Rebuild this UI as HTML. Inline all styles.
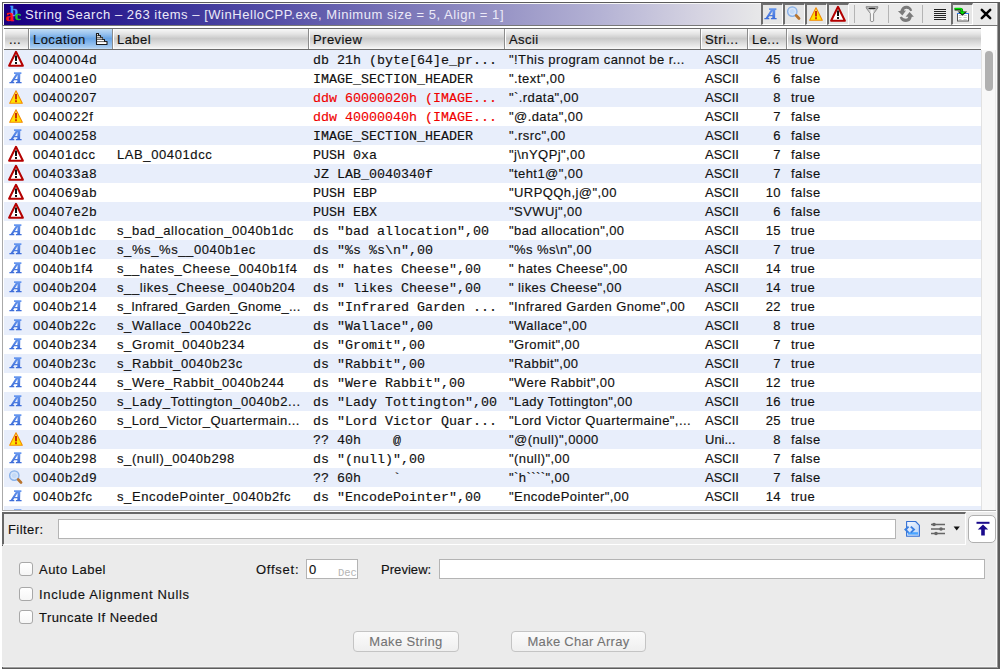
<!DOCTYPE html>
<html><head><meta charset="utf-8"><style>
html,body{margin:0;padding:0}
body{width:1000px;height:669px;overflow:hidden;position:relative;background:#fff;font-family:"Liberation Sans",sans-serif;font-size:13px;color:#111}
.abs{position:absolute}
#title{position:absolute;left:4px;top:4px;width:758px;height:21px;background:linear-gradient(to right,#1a0080 0%,#1a0082 2.4%,#342c96 19.3%,#5c56aa 39%,#8884be 58.8%,#b4b2d4 78.6%,#d6d4e2 91.8%,#e6e6e8 99%,#e8e8ea 100%);color:#eceaf8;line-height:21px;letter-spacing:0.54px;white-space:nowrap}
#hdr{position:absolute;left:4px;top:28px;width:977px;height:22px;border-top:1px solid #6c6c6c;border-bottom:1px solid #6c6c6c;box-sizing:border-box}
.h{position:absolute;top:29px;height:20px;line-height:22px;box-sizing:border-box;white-space:nowrap;overflow:hidden;background:linear-gradient(#f8f8f8 0%,#e4e4e4 25%,#c9c9c9 48%,#d8d8d8 65%,#eeeeee 90%,#fafafa 100%);border-left:1px solid #fff;letter-spacing:0.45px;-webkit-text-stroke:0.15px #111}
.h.sorted{background:linear-gradient(#c0dcf6 0%,#98c2ee 25%,#68a4e4 48%,#86b8ec 70%,#a8ccf0 92%,#c4e0f8 100%)}
.row{position:absolute;left:4px;width:977px;height:19px}
.c{position:absolute;top:0;height:19px;line-height:20px;-webkit-text-stroke:0.15px #111;padding-left:4px;box-sizing:border-box;white-space:nowrap;overflow:hidden;letter-spacing:0.42px}
.lc{letter-spacing:0.8px}
.ty{letter-spacing:0}
.lb{letter-spacing:0.6px}
.m{font-family:"Liberation Mono",monospace;font-size:13.33px;letter-spacing:0;-webkit-text-stroke:0.15px #111;line-height:19px;top:1px}
.red{color:#f00000;-webkit-text-stroke:0.15px #f00000}
.rt{text-align:right;padding-right:5px;padding-left:0}
svg{display:block}
.cb{position:absolute;left:19px;width:14px;height:14px;box-sizing:border-box;border:1px solid #a8a8a8;border-radius:3px;background:linear-gradient(#fff,#f6f6f6)}
.lbl{position:absolute;white-space:nowrap;letter-spacing:0.6px;-webkit-text-stroke:0.15px #111}
.btn{position:absolute;top:631px;height:21px;box-sizing:border-box;border:1px solid #c4c4c4;border-radius:4px;background:linear-gradient(#fbfbfb,#efefef);color:#737373;text-align:center;line-height:20px;letter-spacing:0.6px;-webkit-text-stroke:0.1px #737373}
</style></head><body>
<!-- window frame -->
<div class="abs" style="left:2px;top:2px;width:998px;height:667px;background:#5c5c5c"></div>
<div class="abs" style="left:3px;top:3px;width:995px;height:665px;background:#9c9c9c"></div>
<div class="abs" style="left:3px;top:3px;width:994px;height:664px;background:#f6f6f6"></div>
<div class="abs" style="left:4px;top:4px;width:992px;height:662px;background:#ebebeb"></div>
<!-- title -->
<div id="title"><div class="abs" style="left:0px;top:0px"><svg width="20" height="20" viewBox="0 0 20 20" style="overflow:visible"><text x="6.2" y="12.2" font-family="Liberation Serif" font-weight="bold" font-size="14" fill="#3e9cff" stroke="#3e9cff" stroke-width="0.3">b</text><text x="1.4" y="17.2" font-family="Liberation Serif" font-weight="bold" font-size="16.5" fill="#ff1414" stroke="#ff1414" stroke-width="0.4">a</text><text x="11.0" y="16.3" font-family="Liberation Serif" font-weight="bold" font-size="13" fill="#22cc22" stroke="#22cc22" stroke-width="0.4">c</text></svg></div><span style="position:absolute;left:21px;top:0">String Search &ndash; 263 items &ndash; [WinHelloCPP.exe, Minimum size = 5, Align = 1]</span></div>
<div class="abs" style="left:762px;top:4px;width:234px;height:21px;background:#eaeaea"></div>
<div class="abs" style="left:761px;top:3px;width:22px;height:22px;box-sizing:border-box;border-top:2px solid #6e6e6e;border-left:2px solid #6e6e6e;border-right:1px solid #fff;border-bottom:1px solid #fff;background:#e6e6e6"></div>
<div class="abs" style="left:783px;top:3px;width:22px;height:22px;box-sizing:border-box;border-top:2px solid #6e6e6e;border-left:2px solid #6e6e6e;border-right:1px solid #fff;border-bottom:1px solid #fff;background:#e6e6e6"></div>
<div class="abs" style="left:805px;top:3px;width:22px;height:22px;box-sizing:border-box;border-top:2px solid #6e6e6e;border-left:2px solid #6e6e6e;border-right:1px solid #fff;border-bottom:1px solid #fff;background:#e6e6e6"></div>
<div class="abs" style="left:827px;top:3px;width:22px;height:22px;box-sizing:border-box;border-top:2px solid #6e6e6e;border-left:2px solid #6e6e6e;border-right:1px solid #fff;border-bottom:1px solid #fff;background:#e6e6e6"></div>
<div class="abs" style="left:951px;top:3px;width:22px;height:22px;box-sizing:border-box;border-top:2px solid #6e6e6e;border-left:2px solid #6e6e6e;border-right:1px solid #fff;border-bottom:1px solid #fff;background:#e6e6e6"></div>
<svg class="abs" style="left:764px;top:8px" width="14" height="13" viewBox="0 0 14 13"><defs><linearGradient id="ag" x1="0" y1="0" x2="0" y2="1"><stop offset="0" stop-color="#6a9af0"/><stop offset="1" stop-color="#3a6ad8"/></linearGradient></defs><path d="M5 0.3 H12.4 V2 H11.3 L11.1 10 H12.6 V11.3 H6.9 V10 H8.3 L8.35 8.2 H5.2 L4.1 10 H5.3 V11.3 H0.4 V10 H1.7 L6.7 2 H5 Z M6 6.9 H8.4 L8.6 3 Z" fill="url(#ag)"/></svg>
<svg class="abs" style="left:786px;top:6px" width="16" height="16" viewBox="0 0 16 16"><circle cx="6.3" cy="5.6" r="4.7" fill="#c4daf6" stroke="#88b0e8" stroke-width="1.3"/><circle cx="6.3" cy="5.6" r="3.1" fill="none" stroke="#e4eefa" stroke-width="0.8"/><path d="M10.2 9.6 L13 12.4" stroke="#b8742e" stroke-width="2.8" stroke-linecap="round"/></svg>
<svg class="abs" style="left:808px;top:6px" width="16" height="16" viewBox="0 0 16 16"><defs><linearGradient id="yg" x1="0" y1="0" x2="0" y2="1"><stop offset="0" stop-color="#ffe890"/><stop offset="0.5" stop-color="#ffdc00"/><stop offset="1" stop-color="#ffe800"/></linearGradient></defs><path d="M8 1.8 L14.3 14.3 L1.7 14.3 Z" fill="url(#yg)" stroke="#f48a00" stroke-width="1.1" stroke-linejoin="round"/><rect x="7" y="5" width="2" height="5.4" fill="#c83000"/><rect x="7" y="11.2" width="2" height="2" fill="#d84000"/></svg>
<svg class="abs" style="left:829px;top:5px" width="18" height="18" viewBox="0 0 18 18"><path d="M9 1.8 L15.9 15.8 L2.1 15.8 Z" fill="#fff" stroke="#b40000" stroke-width="2" stroke-linejoin="round"/><rect x="8" y="5.5" width="2" height="5.5" fill="#111"/><rect x="8" y="12" width="2" height="2" fill="#111"/></svg>
<div class="abs" style="left:854px;top:5px;width:1px;height:18px;background:#b4b4b4"></div>
<div class="abs" style="left:888px;top:5px;width:1px;height:18px;background:#b4b4b4"></div>
<div class="abs" style="left:922px;top:5px;width:1px;height:18px;background:#b4b4b4"></div>
<svg class="abs" style="left:864px;top:5px" width="16" height="18" viewBox="0 0 16 18"><defs><linearGradient id="fg" x1="0" x2="1"><stop offset="0" stop-color="#9a9a9a"/><stop offset="0.5" stop-color="#fff"/><stop offset="1" stop-color="#8a8a8a"/></linearGradient></defs><path d="M2.2 1.6 H13.8 L13.8 3 L9.6 8.6 L9.6 16 Q8 17.6 6.4 16 L6.4 8.6 L2.2 3 Z" fill="url(#fg)" stroke="#8a8a8a" stroke-width="0.9"/><ellipse cx="8" cy="3.4" rx="3.6" ry="0.8" fill="#222"/></svg>
<svg class="abs" style="left:897px;top:5px" width="18" height="18" viewBox="0 0 18 18"><path d="M0.9 6 L9 5.6 L5.4 10.6 Z M3.2 6.2 Q5 0.8 9.5 0.8 Q13.5 0.8 15.2 5.4 L13.4 6.2 Q12 3.8 9.4 3.8 Q7.2 3.8 6.6 5.9 Z" fill="#7b7b7b"/><path d="M8.6 11.7 L16.9 11.7 L12.6 7 Z M2.7 12.4 Q4.5 16.9 9 16.9 Q13.8 16.9 14.8 11.7 L11.4 11.7 Q10.8 13.8 9 13.8 Q6.5 13.8 4.4 11.6 Z" fill="#7b7b7b"/></svg>
<div class="abs" style="left:934px;top:9px;width:12px;height:1px;background:#222"></div>
<div class="abs" style="left:934px;top:11px;width:12px;height:1px;background:#222"></div>
<div class="abs" style="left:934px;top:13px;width:12px;height:1px;background:#222"></div>
<div class="abs" style="left:934px;top:15px;width:12px;height:1px;background:#222"></div>
<div class="abs" style="left:934px;top:17px;width:12px;height:1px;background:#222"></div>
<div class="abs" style="left:934px;top:19px;width:12px;height:1px;background:#222"></div>
<svg class="abs" style="left:954px;top:6px" width="16" height="16" viewBox="0 0 16 16"><rect x="3.5" y="7.5" width="11" height="7.5" fill="#fff" stroke="#555" stroke-width="1"/><path d="M3 7.5 H15" stroke="#2a7af0" stroke-width="1"/><path d="M4.8 9.5 H7.5 M9.5 9.5 H12.8 M4.8 11.5 H7.5 M9.5 11.5 H12.8 M4.8 13.5 H7.5 M9.5 13.5 H12.8" stroke="#c4c4c4" stroke-width="0.9"/><path d="M0.6 3.2 H6.2 Q7.9 3.2 7.9 5.2 V6.5" stroke="#111" stroke-width="2.6" fill="none"/><path d="M0.6 2.6 H6.2 Q7.9 2.6 7.9 4.6 V6.5" stroke="#00e000" stroke-width="1.8" fill="none"/><path d="M3.6 5.4 L13.2 5.4 L8.4 9.8 Z" fill="#111"/><path d="M5.2 5.6 L11.6 5.6 L8.4 8.6 Z" fill="#00e000"/></svg>
<svg class="abs" style="left:980px;top:8px" width="12" height="12" viewBox="0 0 12 12"><path d="M1.8 1.8 L10.2 10.2 M10.2 1.8 L1.8 10.2" stroke="#000" stroke-width="2.5" stroke-linecap="round"/></svg>
<div class="abs" style="left:2px;top:25px;width:996px;height:1px;background:#777"></div>
<!-- table region -->
<div class="abs" style="left:2px;top:26px;width:994px;height:486px;background:#fff"></div>
<div class="abs" style="left:2px;top:26px;width:1px;height:485px;background:#aaa"></div>
<div class="abs" style="left:2px;top:510px;width:994px;height:1px;background:#aaa"></div>
<div id="hdr"></div>
<div class="h" style="left:4px;width:24px"><span style="padding-left:4px">...</span></div>
<div class="abs" style="left:28px;top:29px;width:1px;height:20px;background:#8c8c8c"></div>
<div class="h sorted" style="left:29px;width:83px"><span style="padding-left:3px">Location</span><svg class="abs" style="left:65px;top:4px" width="13" height="12" viewBox="0 0 13 12"><path d="M1.5 0.5 H3.5 V2.5 H5.5 V4.5 H7.5 V6.5 H9.5 V8.5 H12 V11.5 H1.5 Z" fill="#fff" stroke="#1a1a1a" stroke-width="1.1" stroke-linejoin="round"/><rect x="2" y="4.6" width="5.4" height="1.6" fill="#bdbdbd"/><path d="M2 2.5 H5.4 M2 4.3 H7.4 M2 6.5 H9.4 M2 8.6 H11.8" stroke="#2a2a2a" stroke-width="0.7"/></svg></div>
<div class="abs" style="left:112px;top:29px;width:1px;height:20px;background:#8c8c8c"></div>
<div class="h" style="left:113px;width:195px"><span style="padding-left:3px">Label</span></div>
<div class="abs" style="left:308px;top:29px;width:1px;height:20px;background:#8c8c8c"></div>
<div class="h" style="left:309px;width:195px"><span style="padding-left:3px">Preview</span></div>
<div class="abs" style="left:504px;top:29px;width:1px;height:20px;background:#8c8c8c"></div>
<div class="h" style="left:505px;width:195px"><span style="padding-left:3px">Ascii</span></div>
<div class="abs" style="left:700px;top:29px;width:1px;height:20px;background:#8c8c8c"></div>
<div class="h" style="left:701px;width:46px"><span style="padding-left:3px">Stri...</span></div>
<div class="abs" style="left:747px;top:29px;width:1px;height:20px;background:#8c8c8c"></div>
<div class="h" style="left:748px;width:38px"><span style="padding-left:3px">Le...</span></div>
<div class="abs" style="left:786px;top:29px;width:1px;height:20px;background:#8c8c8c"></div>
<div class="h" style="left:787px;width:194px"><span style="padding-left:3px">Is Word</span></div>
<div class="abs" style="left:0;top:50px;width:1000px;height:460px;overflow:hidden">
<div class="abs" style="left:0;top:-50px;width:1000px;height:560px">
<div class="row" style="top:50px;background:#e8eefb"><svg class="abs" style="left:3px;top:0px" width="18" height="18" viewBox="0 0 18 18"><path d="M9 1.8 L15.9 15.8 L2.1 15.8 Z" fill="#fff" stroke="#b40000" stroke-width="2" stroke-linejoin="round"/><rect x="8" y="5.5" width="2" height="5.5" fill="#111"/><rect x="8" y="12" width="2" height="2" fill="#111"/></svg><div class="c lc" style="left:25px;width:83px">0040004d</div><div class="c lb" style="left:109px;width:195px"></div><div class="c m" style="left:305px;width:195px">db&nbsp;21h&nbsp;(byte[64]e_pr...</div><div class="c" style="left:501px;width:195px">"!This program cannot be r...</div><div class="c ty" style="left:697px;width:46px">ASCII</div><div class="c rt" style="left:744px;width:38px">45</div><div class="c" style="left:783px;width:194px">true</div></div>
<div class="row" style="top:69px;background:#ffffff"><svg class="abs" style="left:5px;top:3px" width="14" height="13" viewBox="0 0 14 13"><defs><linearGradient id="ag" x1="0" y1="0" x2="0" y2="1"><stop offset="0" stop-color="#6a9af0"/><stop offset="1" stop-color="#3a6ad8"/></linearGradient></defs><path d="M5 0.3 H12.4 V2 H11.3 L11.1 10 H12.6 V11.3 H6.9 V10 H8.3 L8.35 8.2 H5.2 L4.1 10 H5.3 V11.3 H0.4 V10 H1.7 L6.7 2 H5 Z M6 6.9 H8.4 L8.6 3 Z" fill="url(#ag)"/></svg><div class="c lc" style="left:25px;width:83px">004001e0</div><div class="c lb" style="left:109px;width:195px"></div><div class="c m" style="left:305px;width:195px">IMAGE_SECTION_HEADER</div><div class="c" style="left:501px;width:195px">".text",00</div><div class="c ty" style="left:697px;width:46px">ASCII</div><div class="c rt" style="left:744px;width:38px">6</div><div class="c" style="left:783px;width:194px">false</div></div>
<div class="row" style="top:88px;background:#e8eefb"><svg class="abs" style="left:4px;top:1px" width="16" height="16" viewBox="0 0 16 16"><defs><linearGradient id="yg" x1="0" y1="0" x2="0" y2="1"><stop offset="0" stop-color="#ffe890"/><stop offset="0.5" stop-color="#ffdc00"/><stop offset="1" stop-color="#ffe800"/></linearGradient></defs><path d="M8 1.8 L14.3 14.3 L1.7 14.3 Z" fill="url(#yg)" stroke="#f48a00" stroke-width="1.1" stroke-linejoin="round"/><rect x="7" y="5" width="2" height="5.4" fill="#c83000"/><rect x="7" y="11.2" width="2" height="2" fill="#d84000"/></svg><div class="c lc" style="left:25px;width:83px">00400207</div><div class="c lb" style="left:109px;width:195px"></div><div class="c m red" style="left:305px;width:195px">ddw&nbsp;60000020h&nbsp;(IMAGE...</div><div class="c" style="left:501px;width:195px">"`.rdata",00</div><div class="c ty" style="left:697px;width:46px">ASCII</div><div class="c rt" style="left:744px;width:38px">8</div><div class="c" style="left:783px;width:194px">true</div></div>
<div class="row" style="top:107px;background:#ffffff"><svg class="abs" style="left:4px;top:1px" width="16" height="16" viewBox="0 0 16 16"><defs><linearGradient id="yg" x1="0" y1="0" x2="0" y2="1"><stop offset="0" stop-color="#ffe890"/><stop offset="0.5" stop-color="#ffdc00"/><stop offset="1" stop-color="#ffe800"/></linearGradient></defs><path d="M8 1.8 L14.3 14.3 L1.7 14.3 Z" fill="url(#yg)" stroke="#f48a00" stroke-width="1.1" stroke-linejoin="round"/><rect x="7" y="5" width="2" height="5.4" fill="#c83000"/><rect x="7" y="11.2" width="2" height="2" fill="#d84000"/></svg><div class="c lc" style="left:25px;width:83px">0040022f</div><div class="c lb" style="left:109px;width:195px"></div><div class="c m red" style="left:305px;width:195px">ddw&nbsp;40000040h&nbsp;(IMAGE...</div><div class="c" style="left:501px;width:195px">"@.data",00</div><div class="c ty" style="left:697px;width:46px">ASCII</div><div class="c rt" style="left:744px;width:38px">7</div><div class="c" style="left:783px;width:194px">false</div></div>
<div class="row" style="top:126px;background:#e8eefb"><svg class="abs" style="left:5px;top:3px" width="14" height="13" viewBox="0 0 14 13"><defs><linearGradient id="ag" x1="0" y1="0" x2="0" y2="1"><stop offset="0" stop-color="#6a9af0"/><stop offset="1" stop-color="#3a6ad8"/></linearGradient></defs><path d="M5 0.3 H12.4 V2 H11.3 L11.1 10 H12.6 V11.3 H6.9 V10 H8.3 L8.35 8.2 H5.2 L4.1 10 H5.3 V11.3 H0.4 V10 H1.7 L6.7 2 H5 Z M6 6.9 H8.4 L8.6 3 Z" fill="url(#ag)"/></svg><div class="c lc" style="left:25px;width:83px">00400258</div><div class="c lb" style="left:109px;width:195px"></div><div class="c m" style="left:305px;width:195px">IMAGE_SECTION_HEADER</div><div class="c" style="left:501px;width:195px">".rsrc",00</div><div class="c ty" style="left:697px;width:46px">ASCII</div><div class="c rt" style="left:744px;width:38px">6</div><div class="c" style="left:783px;width:194px">false</div></div>
<div class="row" style="top:145px;background:#ffffff"><svg class="abs" style="left:3px;top:0px" width="18" height="18" viewBox="0 0 18 18"><path d="M9 1.8 L15.9 15.8 L2.1 15.8 Z" fill="#fff" stroke="#b40000" stroke-width="2" stroke-linejoin="round"/><rect x="8" y="5.5" width="2" height="5.5" fill="#111"/><rect x="8" y="12" width="2" height="2" fill="#111"/></svg><div class="c lc" style="left:25px;width:83px">00401dcc</div><div class="c lb" style="left:109px;width:195px">LAB_00401dcc</div><div class="c m" style="left:305px;width:195px">PUSH&nbsp;0xa</div><div class="c" style="left:501px;width:195px">"j\nYQPj",00</div><div class="c ty" style="left:697px;width:46px">ASCII</div><div class="c rt" style="left:744px;width:38px">7</div><div class="c" style="left:783px;width:194px">false</div></div>
<div class="row" style="top:164px;background:#e8eefb"><svg class="abs" style="left:3px;top:0px" width="18" height="18" viewBox="0 0 18 18"><path d="M9 1.8 L15.9 15.8 L2.1 15.8 Z" fill="#fff" stroke="#b40000" stroke-width="2" stroke-linejoin="round"/><rect x="8" y="5.5" width="2" height="5.5" fill="#111"/><rect x="8" y="12" width="2" height="2" fill="#111"/></svg><div class="c lc" style="left:25px;width:83px">004033a8</div><div class="c lb" style="left:109px;width:195px"></div><div class="c m" style="left:305px;width:195px">JZ&nbsp;LAB_0040340f</div><div class="c" style="left:501px;width:195px">"teht1@",00</div><div class="c ty" style="left:697px;width:46px">ASCII</div><div class="c rt" style="left:744px;width:38px">7</div><div class="c" style="left:783px;width:194px">false</div></div>
<div class="row" style="top:183px;background:#ffffff"><svg class="abs" style="left:3px;top:0px" width="18" height="18" viewBox="0 0 18 18"><path d="M9 1.8 L15.9 15.8 L2.1 15.8 Z" fill="#fff" stroke="#b40000" stroke-width="2" stroke-linejoin="round"/><rect x="8" y="5.5" width="2" height="5.5" fill="#111"/><rect x="8" y="12" width="2" height="2" fill="#111"/></svg><div class="c lc" style="left:25px;width:83px">004069ab</div><div class="c lb" style="left:109px;width:195px"></div><div class="c m" style="left:305px;width:195px">PUSH&nbsp;EBP</div><div class="c" style="left:501px;width:195px">"URPQQh,j@",00</div><div class="c ty" style="left:697px;width:46px">ASCII</div><div class="c rt" style="left:744px;width:38px">10</div><div class="c" style="left:783px;width:194px">false</div></div>
<div class="row" style="top:202px;background:#e8eefb"><svg class="abs" style="left:3px;top:0px" width="18" height="18" viewBox="0 0 18 18"><path d="M9 1.8 L15.9 15.8 L2.1 15.8 Z" fill="#fff" stroke="#b40000" stroke-width="2" stroke-linejoin="round"/><rect x="8" y="5.5" width="2" height="5.5" fill="#111"/><rect x="8" y="12" width="2" height="2" fill="#111"/></svg><div class="c lc" style="left:25px;width:83px">00407e2b</div><div class="c lb" style="left:109px;width:195px"></div><div class="c m" style="left:305px;width:195px">PUSH&nbsp;EBX</div><div class="c" style="left:501px;width:195px">"SVWUj",00</div><div class="c ty" style="left:697px;width:46px">ASCII</div><div class="c rt" style="left:744px;width:38px">6</div><div class="c" style="left:783px;width:194px">false</div></div>
<div class="row" style="top:221px;background:#ffffff"><svg class="abs" style="left:5px;top:3px" width="14" height="13" viewBox="0 0 14 13"><defs><linearGradient id="ag" x1="0" y1="0" x2="0" y2="1"><stop offset="0" stop-color="#6a9af0"/><stop offset="1" stop-color="#3a6ad8"/></linearGradient></defs><path d="M5 0.3 H12.4 V2 H11.3 L11.1 10 H12.6 V11.3 H6.9 V10 H8.3 L8.35 8.2 H5.2 L4.1 10 H5.3 V11.3 H0.4 V10 H1.7 L6.7 2 H5 Z M6 6.9 H8.4 L8.6 3 Z" fill="url(#ag)"/></svg><div class="c lc" style="left:25px;width:83px">0040b1dc</div><div class="c lb" style="left:109px;width:195px">s_bad_allocation_0040b1dc</div><div class="c m" style="left:305px;width:195px">ds&nbsp;"bad&nbsp;allocation",00</div><div class="c" style="left:501px;width:195px">"bad allocation",00</div><div class="c ty" style="left:697px;width:46px">ASCII</div><div class="c rt" style="left:744px;width:38px">15</div><div class="c" style="left:783px;width:194px">true</div></div>
<div class="row" style="top:240px;background:#e8eefb"><svg class="abs" style="left:5px;top:3px" width="14" height="13" viewBox="0 0 14 13"><defs><linearGradient id="ag" x1="0" y1="0" x2="0" y2="1"><stop offset="0" stop-color="#6a9af0"/><stop offset="1" stop-color="#3a6ad8"/></linearGradient></defs><path d="M5 0.3 H12.4 V2 H11.3 L11.1 10 H12.6 V11.3 H6.9 V10 H8.3 L8.35 8.2 H5.2 L4.1 10 H5.3 V11.3 H0.4 V10 H1.7 L6.7 2 H5 Z M6 6.9 H8.4 L8.6 3 Z" fill="url(#ag)"/></svg><div class="c lc" style="left:25px;width:83px">0040b1ec</div><div class="c lb" style="left:109px;width:195px">s_%s_%s__0040b1ec</div><div class="c m" style="left:305px;width:195px">ds&nbsp;"%s&nbsp;%s\n",00</div><div class="c" style="left:501px;width:195px">"%s %s\n",00</div><div class="c ty" style="left:697px;width:46px">ASCII</div><div class="c rt" style="left:744px;width:38px">7</div><div class="c" style="left:783px;width:194px">true</div></div>
<div class="row" style="top:259px;background:#ffffff"><svg class="abs" style="left:5px;top:3px" width="14" height="13" viewBox="0 0 14 13"><defs><linearGradient id="ag" x1="0" y1="0" x2="0" y2="1"><stop offset="0" stop-color="#6a9af0"/><stop offset="1" stop-color="#3a6ad8"/></linearGradient></defs><path d="M5 0.3 H12.4 V2 H11.3 L11.1 10 H12.6 V11.3 H6.9 V10 H8.3 L8.35 8.2 H5.2 L4.1 10 H5.3 V11.3 H0.4 V10 H1.7 L6.7 2 H5 Z M6 6.9 H8.4 L8.6 3 Z" fill="url(#ag)"/></svg><div class="c lc" style="left:25px;width:83px">0040b1f4</div><div class="c lb" style="left:109px;width:195px">s__hates_Cheese_0040b1f4</div><div class="c m" style="left:305px;width:195px">ds&nbsp;"&nbsp;hates&nbsp;Cheese",00</div><div class="c" style="left:501px;width:195px">" hates Cheese",00</div><div class="c ty" style="left:697px;width:46px">ASCII</div><div class="c rt" style="left:744px;width:38px">14</div><div class="c" style="left:783px;width:194px">true</div></div>
<div class="row" style="top:278px;background:#e8eefb"><svg class="abs" style="left:5px;top:3px" width="14" height="13" viewBox="0 0 14 13"><defs><linearGradient id="ag" x1="0" y1="0" x2="0" y2="1"><stop offset="0" stop-color="#6a9af0"/><stop offset="1" stop-color="#3a6ad8"/></linearGradient></defs><path d="M5 0.3 H12.4 V2 H11.3 L11.1 10 H12.6 V11.3 H6.9 V10 H8.3 L8.35 8.2 H5.2 L4.1 10 H5.3 V11.3 H0.4 V10 H1.7 L6.7 2 H5 Z M6 6.9 H8.4 L8.6 3 Z" fill="url(#ag)"/></svg><div class="c lc" style="left:25px;width:83px">0040b204</div><div class="c lb" style="left:109px;width:195px">s__likes_Cheese_0040b204</div><div class="c m" style="left:305px;width:195px">ds&nbsp;"&nbsp;likes&nbsp;Cheese",00</div><div class="c" style="left:501px;width:195px">" likes Cheese",00</div><div class="c ty" style="left:697px;width:46px">ASCII</div><div class="c rt" style="left:744px;width:38px">14</div><div class="c" style="left:783px;width:194px">true</div></div>
<div class="row" style="top:297px;background:#ffffff"><svg class="abs" style="left:5px;top:3px" width="14" height="13" viewBox="0 0 14 13"><defs><linearGradient id="ag" x1="0" y1="0" x2="0" y2="1"><stop offset="0" stop-color="#6a9af0"/><stop offset="1" stop-color="#3a6ad8"/></linearGradient></defs><path d="M5 0.3 H12.4 V2 H11.3 L11.1 10 H12.6 V11.3 H6.9 V10 H8.3 L8.35 8.2 H5.2 L4.1 10 H5.3 V11.3 H0.4 V10 H1.7 L6.7 2 H5 Z M6 6.9 H8.4 L8.6 3 Z" fill="url(#ag)"/></svg><div class="c lc" style="left:25px;width:83px">0040b214</div><div class="c lb" style="left:109px;width:195px;letter-spacing:0.24px">s_Infrared_Garden_Gnome_...</div><div class="c m" style="left:305px;width:195px">ds&nbsp;"Infrared&nbsp;Garden&nbsp;...</div><div class="c" style="left:501px;width:195px">"Infrared Garden Gnome",00</div><div class="c ty" style="left:697px;width:46px">ASCII</div><div class="c rt" style="left:744px;width:38px">22</div><div class="c" style="left:783px;width:194px">true</div></div>
<div class="row" style="top:316px;background:#e8eefb"><svg class="abs" style="left:5px;top:3px" width="14" height="13" viewBox="0 0 14 13"><defs><linearGradient id="ag" x1="0" y1="0" x2="0" y2="1"><stop offset="0" stop-color="#6a9af0"/><stop offset="1" stop-color="#3a6ad8"/></linearGradient></defs><path d="M5 0.3 H12.4 V2 H11.3 L11.1 10 H12.6 V11.3 H6.9 V10 H8.3 L8.35 8.2 H5.2 L4.1 10 H5.3 V11.3 H0.4 V10 H1.7 L6.7 2 H5 Z M6 6.9 H8.4 L8.6 3 Z" fill="url(#ag)"/></svg><div class="c lc" style="left:25px;width:83px">0040b22c</div><div class="c lb" style="left:109px;width:195px">s_Wallace_0040b22c</div><div class="c m" style="left:305px;width:195px">ds&nbsp;"Wallace",00</div><div class="c" style="left:501px;width:195px">"Wallace",00</div><div class="c ty" style="left:697px;width:46px">ASCII</div><div class="c rt" style="left:744px;width:38px">8</div><div class="c" style="left:783px;width:194px">true</div></div>
<div class="row" style="top:335px;background:#ffffff"><svg class="abs" style="left:5px;top:3px" width="14" height="13" viewBox="0 0 14 13"><defs><linearGradient id="ag" x1="0" y1="0" x2="0" y2="1"><stop offset="0" stop-color="#6a9af0"/><stop offset="1" stop-color="#3a6ad8"/></linearGradient></defs><path d="M5 0.3 H12.4 V2 H11.3 L11.1 10 H12.6 V11.3 H6.9 V10 H8.3 L8.35 8.2 H5.2 L4.1 10 H5.3 V11.3 H0.4 V10 H1.7 L6.7 2 H5 Z M6 6.9 H8.4 L8.6 3 Z" fill="url(#ag)"/></svg><div class="c lc" style="left:25px;width:83px">0040b234</div><div class="c lb" style="left:109px;width:195px">s_Gromit_0040b234</div><div class="c m" style="left:305px;width:195px">ds&nbsp;"Gromit",00</div><div class="c" style="left:501px;width:195px">"Gromit",00</div><div class="c ty" style="left:697px;width:46px">ASCII</div><div class="c rt" style="left:744px;width:38px">7</div><div class="c" style="left:783px;width:194px">true</div></div>
<div class="row" style="top:354px;background:#e8eefb"><svg class="abs" style="left:5px;top:3px" width="14" height="13" viewBox="0 0 14 13"><defs><linearGradient id="ag" x1="0" y1="0" x2="0" y2="1"><stop offset="0" stop-color="#6a9af0"/><stop offset="1" stop-color="#3a6ad8"/></linearGradient></defs><path d="M5 0.3 H12.4 V2 H11.3 L11.1 10 H12.6 V11.3 H6.9 V10 H8.3 L8.35 8.2 H5.2 L4.1 10 H5.3 V11.3 H0.4 V10 H1.7 L6.7 2 H5 Z M6 6.9 H8.4 L8.6 3 Z" fill="url(#ag)"/></svg><div class="c lc" style="left:25px;width:83px">0040b23c</div><div class="c lb" style="left:109px;width:195px">s_Rabbit_0040b23c</div><div class="c m" style="left:305px;width:195px">ds&nbsp;"Rabbit",00</div><div class="c" style="left:501px;width:195px">"Rabbit",00</div><div class="c ty" style="left:697px;width:46px">ASCII</div><div class="c rt" style="left:744px;width:38px">7</div><div class="c" style="left:783px;width:194px">true</div></div>
<div class="row" style="top:373px;background:#ffffff"><svg class="abs" style="left:5px;top:3px" width="14" height="13" viewBox="0 0 14 13"><defs><linearGradient id="ag" x1="0" y1="0" x2="0" y2="1"><stop offset="0" stop-color="#6a9af0"/><stop offset="1" stop-color="#3a6ad8"/></linearGradient></defs><path d="M5 0.3 H12.4 V2 H11.3 L11.1 10 H12.6 V11.3 H6.9 V10 H8.3 L8.35 8.2 H5.2 L4.1 10 H5.3 V11.3 H0.4 V10 H1.7 L6.7 2 H5 Z M6 6.9 H8.4 L8.6 3 Z" fill="url(#ag)"/></svg><div class="c lc" style="left:25px;width:83px">0040b244</div><div class="c lb" style="left:109px;width:195px">s_Were_Rabbit_0040b244</div><div class="c m" style="left:305px;width:195px">ds&nbsp;"Were&nbsp;Rabbit",00</div><div class="c" style="left:501px;width:195px">"Were Rabbit",00</div><div class="c ty" style="left:697px;width:46px">ASCII</div><div class="c rt" style="left:744px;width:38px">12</div><div class="c" style="left:783px;width:194px">true</div></div>
<div class="row" style="top:392px;background:#e8eefb"><svg class="abs" style="left:5px;top:3px" width="14" height="13" viewBox="0 0 14 13"><defs><linearGradient id="ag" x1="0" y1="0" x2="0" y2="1"><stop offset="0" stop-color="#6a9af0"/><stop offset="1" stop-color="#3a6ad8"/></linearGradient></defs><path d="M5 0.3 H12.4 V2 H11.3 L11.1 10 H12.6 V11.3 H6.9 V10 H8.3 L8.35 8.2 H5.2 L4.1 10 H5.3 V11.3 H0.4 V10 H1.7 L6.7 2 H5 Z M6 6.9 H8.4 L8.6 3 Z" fill="url(#ag)"/></svg><div class="c lc" style="left:25px;width:83px">0040b250</div><div class="c lb" style="left:109px;width:195px;letter-spacing:0.62px">s_Lady_Tottington_0040b2...</div><div class="c m" style="left:305px;width:195px">ds&nbsp;"Lady&nbsp;Tottington",00</div><div class="c" style="left:501px;width:195px">"Lady Tottington",00</div><div class="c ty" style="left:697px;width:46px">ASCII</div><div class="c rt" style="left:744px;width:38px">16</div><div class="c" style="left:783px;width:194px">true</div></div>
<div class="row" style="top:411px;background:#ffffff"><svg class="abs" style="left:5px;top:3px" width="14" height="13" viewBox="0 0 14 13"><defs><linearGradient id="ag" x1="0" y1="0" x2="0" y2="1"><stop offset="0" stop-color="#6a9af0"/><stop offset="1" stop-color="#3a6ad8"/></linearGradient></defs><path d="M5 0.3 H12.4 V2 H11.3 L11.1 10 H12.6 V11.3 H6.9 V10 H8.3 L8.35 8.2 H5.2 L4.1 10 H5.3 V11.3 H0.4 V10 H1.7 L6.7 2 H5 Z M6 6.9 H8.4 L8.6 3 Z" fill="url(#ag)"/></svg><div class="c lc" style="left:25px;width:83px">0040b260</div><div class="c lb" style="left:109px;width:195px;letter-spacing:0.45px">s_Lord_Victor_Quartermain...</div><div class="c m" style="left:305px;width:195px">ds&nbsp;"Lord&nbsp;Victor&nbsp;Quar...</div><div class="c" style="left:501px;width:195px">"Lord Victor Quartermaine",...</div><div class="c ty" style="left:697px;width:46px">ASCII</div><div class="c rt" style="left:744px;width:38px">25</div><div class="c" style="left:783px;width:194px">true</div></div>
<div class="row" style="top:430px;background:#e8eefb"><svg class="abs" style="left:4px;top:1px" width="16" height="16" viewBox="0 0 16 16"><defs><linearGradient id="yg" x1="0" y1="0" x2="0" y2="1"><stop offset="0" stop-color="#ffe890"/><stop offset="0.5" stop-color="#ffdc00"/><stop offset="1" stop-color="#ffe800"/></linearGradient></defs><path d="M8 1.8 L14.3 14.3 L1.7 14.3 Z" fill="url(#yg)" stroke="#f48a00" stroke-width="1.1" stroke-linejoin="round"/><rect x="7" y="5" width="2" height="5.4" fill="#c83000"/><rect x="7" y="11.2" width="2" height="2" fill="#d84000"/></svg><div class="c lc" style="left:25px;width:83px">0040b286</div><div class="c lb" style="left:109px;width:195px"></div><div class="c m" style="left:305px;width:195px">??&nbsp;40h&nbsp;&nbsp;&nbsp;&nbsp;@</div><div class="c" style="left:501px;width:195px">"@(null)",0000</div><div class="c ty" style="left:697px;width:46px">Uni...</div><div class="c rt" style="left:744px;width:38px">8</div><div class="c" style="left:783px;width:194px">false</div></div>
<div class="row" style="top:449px;background:#ffffff"><svg class="abs" style="left:5px;top:3px" width="14" height="13" viewBox="0 0 14 13"><defs><linearGradient id="ag" x1="0" y1="0" x2="0" y2="1"><stop offset="0" stop-color="#6a9af0"/><stop offset="1" stop-color="#3a6ad8"/></linearGradient></defs><path d="M5 0.3 H12.4 V2 H11.3 L11.1 10 H12.6 V11.3 H6.9 V10 H8.3 L8.35 8.2 H5.2 L4.1 10 H5.3 V11.3 H0.4 V10 H1.7 L6.7 2 H5 Z M6 6.9 H8.4 L8.6 3 Z" fill="url(#ag)"/></svg><div class="c lc" style="left:25px;width:83px">0040b298</div><div class="c lb" style="left:109px;width:195px">s_(null)_0040b298</div><div class="c m" style="left:305px;width:195px">ds&nbsp;"(null)",00</div><div class="c" style="left:501px;width:195px">"(null)",00</div><div class="c ty" style="left:697px;width:46px">ASCII</div><div class="c rt" style="left:744px;width:38px">7</div><div class="c" style="left:783px;width:194px">false</div></div>
<div class="row" style="top:468px;background:#e8eefb"><svg class="abs" style="left:4px;top:2px" width="16" height="16" viewBox="0 0 16 16"><circle cx="6.3" cy="5.6" r="4.7" fill="#c4daf6" stroke="#88b0e8" stroke-width="1.3"/><circle cx="6.3" cy="5.6" r="3.1" fill="none" stroke="#e4eefa" stroke-width="0.8"/><path d="M10.2 9.6 L13 12.4" stroke="#b8742e" stroke-width="2.8" stroke-linecap="round"/></svg><div class="c lc" style="left:25px;width:83px">0040b2d9</div><div class="c lb" style="left:109px;width:195px"></div><div class="c m" style="left:305px;width:195px">??&nbsp;60h&nbsp;&nbsp;&nbsp;&nbsp;`</div><div class="c" style="left:501px;width:195px">"`h````",00</div><div class="c ty" style="left:697px;width:46px">ASCII</div><div class="c rt" style="left:744px;width:38px">7</div><div class="c" style="left:783px;width:194px">false</div></div>
<div class="row" style="top:487px;background:#ffffff"><svg class="abs" style="left:5px;top:3px" width="14" height="13" viewBox="0 0 14 13"><defs><linearGradient id="ag" x1="0" y1="0" x2="0" y2="1"><stop offset="0" stop-color="#6a9af0"/><stop offset="1" stop-color="#3a6ad8"/></linearGradient></defs><path d="M5 0.3 H12.4 V2 H11.3 L11.1 10 H12.6 V11.3 H6.9 V10 H8.3 L8.35 8.2 H5.2 L4.1 10 H5.3 V11.3 H0.4 V10 H1.7 L6.7 2 H5 Z M6 6.9 H8.4 L8.6 3 Z" fill="url(#ag)"/></svg><div class="c lc" style="left:25px;width:83px">0040b2fc</div><div class="c lb" style="left:109px;width:195px">s_EncodePointer_0040b2fc</div><div class="c m" style="left:305px;width:195px">ds&nbsp;"EncodePointer",00</div><div class="c" style="left:501px;width:195px">"EncodePointer",00</div><div class="c ty" style="left:697px;width:46px">ASCII</div><div class="c rt" style="left:744px;width:38px">14</div><div class="c" style="left:783px;width:194px">true</div></div>
<div class="row" style="top:506px;background:#e8eefb"><svg class="abs" style="left:5px;top:3px" width="14" height="13" viewBox="0 0 14 13"><defs><linearGradient id="ag" x1="0" y1="0" x2="0" y2="1"><stop offset="0" stop-color="#6a9af0"/><stop offset="1" stop-color="#3a6ad8"/></linearGradient></defs><path d="M5 0.3 H12.4 V2 H11.3 L11.1 10 H12.6 V11.3 H6.9 V10 H8.3 L8.35 8.2 H5.2 L4.1 10 H5.3 V11.3 H0.4 V10 H1.7 L6.7 2 H5 Z M6 6.9 H8.4 L8.6 3 Z" fill="url(#ag)"/></svg><div class="c lc" style="left:25px;width:83px"></div><div class="c lb" style="left:109px;width:195px"></div><div class="c m" style="left:305px;width:195px"></div><div class="c" style="left:501px;width:195px"></div><div class="c ty" style="left:697px;width:46px"></div><div class="c rt" style="left:744px;width:38px"></div><div class="c" style="left:783px;width:194px"></div></div>
</div></div>
<!-- scrollbar -->
<div class="abs" style="left:981px;top:50px;width:15px;height:460px;background:#f8f8f8;border-left:1px solid #e2e2e2;border-right:1px solid #ececec;box-sizing:border-box"></div>
<div class="abs" style="left:985px;top:51px;width:8px;height:40px;border-radius:4px;background:#b0b0b0"></div>
<!-- filter panel -->
<div class="abs" style="left:2px;top:512px;width:964px;height:33px;box-sizing:border-box;border-top:2px solid #676767;border-left:2px solid #676767;border-right:1px solid #fff;border-bottom:1px solid #fff;background:#ebebeb"></div>
<div class="lbl" style="left:8px;top:522px;letter-spacing:0.43px">Filter:</div>
<div class="abs" style="left:58px;top:519px;width:838px;height:20px;box-sizing:border-box;border:1px solid #b4b4b4;background:#fff"></div>
<svg class="abs" style="left:903px;top:520px" width="18" height="18" viewBox="0 0 18 18"><defs><linearGradient id="pg" x1="0" y1="0" x2="1" y2="1"><stop offset="0" stop-color="#f4f8ff"/><stop offset="1" stop-color="#b8d2f6"/></linearGradient></defs><path d="M3.6 1.5 H12.6 L16.4 5.3 V16.3 H3.6 Z" fill="url(#pg)" stroke="#3470d4" stroke-width="1.1" stroke-linejoin="round"/><rect x="5" y="12.2" width="10" height="2.4" fill="#4aa4ff"/><path d="M5.6 6.6 L2.4 9.6 L5.6 12.6 M7.8 6.6 L11 9.6 L7.8 12.6" stroke="#3a7ee0" stroke-width="1.9" fill="none"/></svg><svg class="abs" style="left:930px;top:521px" width="16" height="16" viewBox="0 0 16 16"><path d="M1 3.5 H15 M1 8 H15 M1 12.5 H15" stroke="#666" stroke-width="1.4"/><circle cx="4" cy="3.5" r="1.8" fill="#666"/><circle cx="11" cy="8" r="1.8" fill="#666"/><circle cx="6" cy="12.5" r="1.8" fill="#666"/></svg><svg class="abs" style="left:953px;top:526px" width="8" height="5" viewBox="0 0 8 5"><path d="M0.6 0.6 H6.8 L3.7 4.4 Z" fill="#111"/></svg>
<div class="abs" style="left:968px;top:515px;width:28px;height:28px;box-sizing:border-box;border:1px solid #b0b0b0;border-radius:5px;background:#fff"></div>
<svg class="abs" style="left:973.5px;top:520px" width="18" height="18" viewBox="0 0 18 18"><rect x="2.5" y="1.8" width="13" height="2" fill="#1a0a8c"/><path d="M9 4.5 L14.2 9.5 H10.8 V15.5 H7.2 V9.5 H3.8 Z" fill="#1a0a8c"/></svg>
<!-- bottom panel -->
<div class="abs" style="left:2px;top:546px;width:995px;height:120px;background:#ebebeb"></div>
<div class="abs" style="left:2px;top:666px;width:995px;height:1px;background:#f2f2f2"></div>
<div class="abs" style="left:996px;top:26px;width:1px;height:641px;background:#fafafa"></div>
<div class="cb" style="top:562px"></div><div class="lbl" style="left:39px;top:562px;letter-spacing:0.48px">Auto Label</div>
<div class="cb" style="top:587px"></div><div class="lbl" style="left:39px;top:587px;letter-spacing:0.68px">Include Alignment Nulls</div>
<div class="cb" style="top:610px"></div><div class="lbl" style="left:39px;top:610px;letter-spacing:0.45px">Truncate If Needed</div>
<div class="lbl" style="left:256px;top:562px;letter-spacing:0.75px">Offset:</div>
<div class="abs" style="left:306px;top:559px;width:52px;height:20px;box-sizing:border-box;border:1px solid #b4b4b4;background:#fff"></div>
<div class="lbl" style="left:309px;top:562px;letter-spacing:0">0</div>
<div class="abs" style="left:338px;top:567px;font-family:'Liberation Mono',monospace;font-size:10.5px;color:#b4b4b4">Dec</div>
<div class="lbl" style="left:381px;top:562px;letter-spacing:0.05px">Preview:</div>
<div class="abs" style="left:439px;top:559px;width:546px;height:20px;box-sizing:border-box;border:1px solid #b4b4b4;background:#fff"></div>
<div class="btn" style="left:353px;width:106px;letter-spacing:0.36px">Make String</div>
<div class="btn" style="left:511px;width:135px;letter-spacing:0.3px">Make Char Array</div>
</body></html>
